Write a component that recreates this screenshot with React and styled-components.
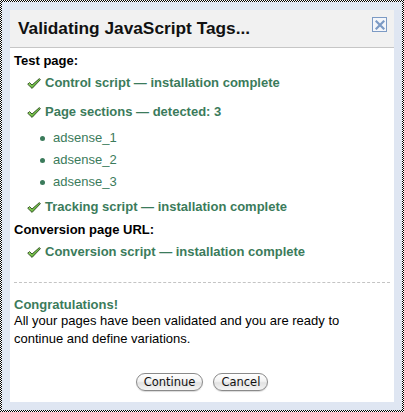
import React from "react";
import styled, { createGlobalStyle } from "styled-components";

const Global = createGlobalStyle`
  html, body { margin: 0; padding: 0; background: #fff; }
  body { font-family: "Liberation Sans", Arial, sans-serif; }
`;

const Outer = styled.div`
  width: 404px;
  height: 412px;
  box-sizing: border-box;
  padding: 2px;
  background: repeating-conic-gradient(#000 0 25%, #fff 0 50%) 0 0 / 2px 2px;
`;

const Frame = styled.div`
  height: 100%;
  box-sizing: border-box;
  padding: 8px;
  background: #dfe6f2;
`;

const Panel = styled.div`
  height: 100%;
  background: #fff;
  display: flex;
  flex-direction: column;
`;

const Header = styled.div`
  display: flex;
  align-items: flex-start;
  justify-content: space-between;
  background: #f1f1f1;
  border-bottom: 1px solid #c6c6c6;
  height: 37px;
  box-sizing: content-box;
  padding: 0 7px 0 8px;
`;

const Title = styled.h1`
  margin: 7px 0 0;
  font-size: 17.3px;
  line-height: 22px;
  font-weight: bold;
  color: #111;
`;

const CloseBox = styled.button`
  margin-top: 7px;
  width: 15px;
  height: 15px;
  padding: 0;
  box-sizing: border-box;
  border: 1.5px solid #7c9ac4;
  background: #f4f6fa;
  display: flex;
  align-items: center;
  justify-content: center;
  cursor: pointer;
`;

const Body = styled.div`
  padding: 2px 4px 0;
  display: flex;
  flex-direction: column;
`;

const Heading = styled.div`
  font-size: 13px;
  line-height: 22px;
  font-weight: bold;
  color: #000;
  margin-top: ${(p) => p.$mt || 0}px;
`;

const CheckRow = styled.div`
  display: flex;
  align-items: center;
  gap: 4px;
  padding-left: 13px;
  font-size: 13px;
  line-height: 22px;
  font-weight: bold;
  color: #3b7b5b;
  margin-top: ${(p) => p.$mt || 0}px;
`;

const BulletRow = styled.div`
  display: flex;
  align-items: center;
  gap: 8px;
  padding-left: 26px;
  font-size: 13px;
  line-height: 22px;
  color: #3b7b5b;
  margin-top: ${(p) => p.$mt || 0}px;
`;

const Dot = styled.span`
  width: 5px;
  height: 5px;
  border-radius: 50%;
  background: #3b7b5b;
  margin-top: 1px;
`;

const Divider = styled.div`
  margin: 19px 0 0;
  height: 0;
  border-top: 1px dashed #c4c4c4;
`;

const Congrats = styled.div`
  margin-top: 14px;
  font-size: 13px;
  line-height: 15px;
  font-weight: bold;
  color: #3b7b5b;
`;

const Para = styled.p`
  margin: 0;
  font-size: 13px;
  line-height: 18px;
  color: #000;
`;

const Buttons = styled.div`
  display: flex;
  justify-content: center;
  gap: 10px;
  margin-top: 25px;
`;

const Pill = styled.button`
  height: 18px;
  padding: 0 ${(p) => p.$pad}px;
  border: 1px solid #8a8a8a;
  border-radius: 9px;
  background: linear-gradient(#ffffff 0%, #f3f3f3 45%, #e2e2e2 55%, #f4f4f4 100%);
  box-shadow: 0 1px 1px rgba(0,0,0,0.15);
  font-family: "DejaVu Sans", "Liberation Sans", sans-serif;
  font-size: 11.5px;
  line-height: 16px;
  color: #111;
  cursor: pointer;
`;

const Check = () => (
  <svg width="14" height="11" viewBox="0 0 14 11">
    <defs>
      <linearGradient id="cg" x1="0" y1="0" x2="1" y2="1">
        <stop offset="0" stopColor="#b8f07a" />
        <stop offset="1" stopColor="#3f9c22" />
      </linearGradient>
    </defs>
    <path
      d="M0.7 6.2 L2.6 4.6 L5 7 L12.4 0.6 L13.4 1.7 L5.1 10.4 Z"
      fill="url(#cg)"
      stroke="#2c4a22"
      strokeWidth="0.9"
      strokeLinejoin="round"
    />
  </svg>
);

const CloseIcon = () => (
  <svg width="10" height="10" viewBox="0 0 10 10">
    <path d="M1.5 1.5 L8.5 8.5 M8.5 1.5 L1.5 8.5" stroke="#7c9ac4" strokeWidth="2.2" strokeLinecap="square" />
  </svg>
);

const Item = ({ mt, children }) => (
  <CheckRow $mt={mt}>
    <Check />
    <span>{children}</span>
  </CheckRow>
);

const Sub = ({ mt, children }) => (
  <BulletRow $mt={mt}>
    <Dot />
    <span>{children}</span>
  </BulletRow>
);

export default function App() {
  return (
    <>
      <Global />
      <Outer>
        <Frame>
          <Panel>
            <Header>
              <Title>Validating JavaScript Tags...</Title>
              <CloseBox aria-label="Close">
                <CloseIcon />
              </CloseBox>
            </Header>
            <Body>
              <Heading>Test page:</Heading>
              <Item>Control script — installation complete</Item>
              <Item mt={7}>Page sections — detected: 3</Item>
              <Sub mt={4}>adsense_1</Sub>
              <Sub>adsense_2</Sub>
              <Sub>adsense_3</Sub>
              <Item mt={3}>Tracking script — installation complete</Item>
              <Heading $mt={1}>Conversion page URL:</Heading>
              <Item>Conversion script — installation complete</Item>
              <Divider />
              <Congrats>Congratulations!</Congrats>
              <Para>
                All your pages have been validated and you are ready to continue and define variations.
              </Para>
              <Buttons>
                <Pill $pad={7}>Continue</Pill>
                <Pill $pad={7}>Cancel</Pill>
              </Buttons>
            </Body>
          </Panel>
        </Frame>
      </Outer>
    </>
  );
}
